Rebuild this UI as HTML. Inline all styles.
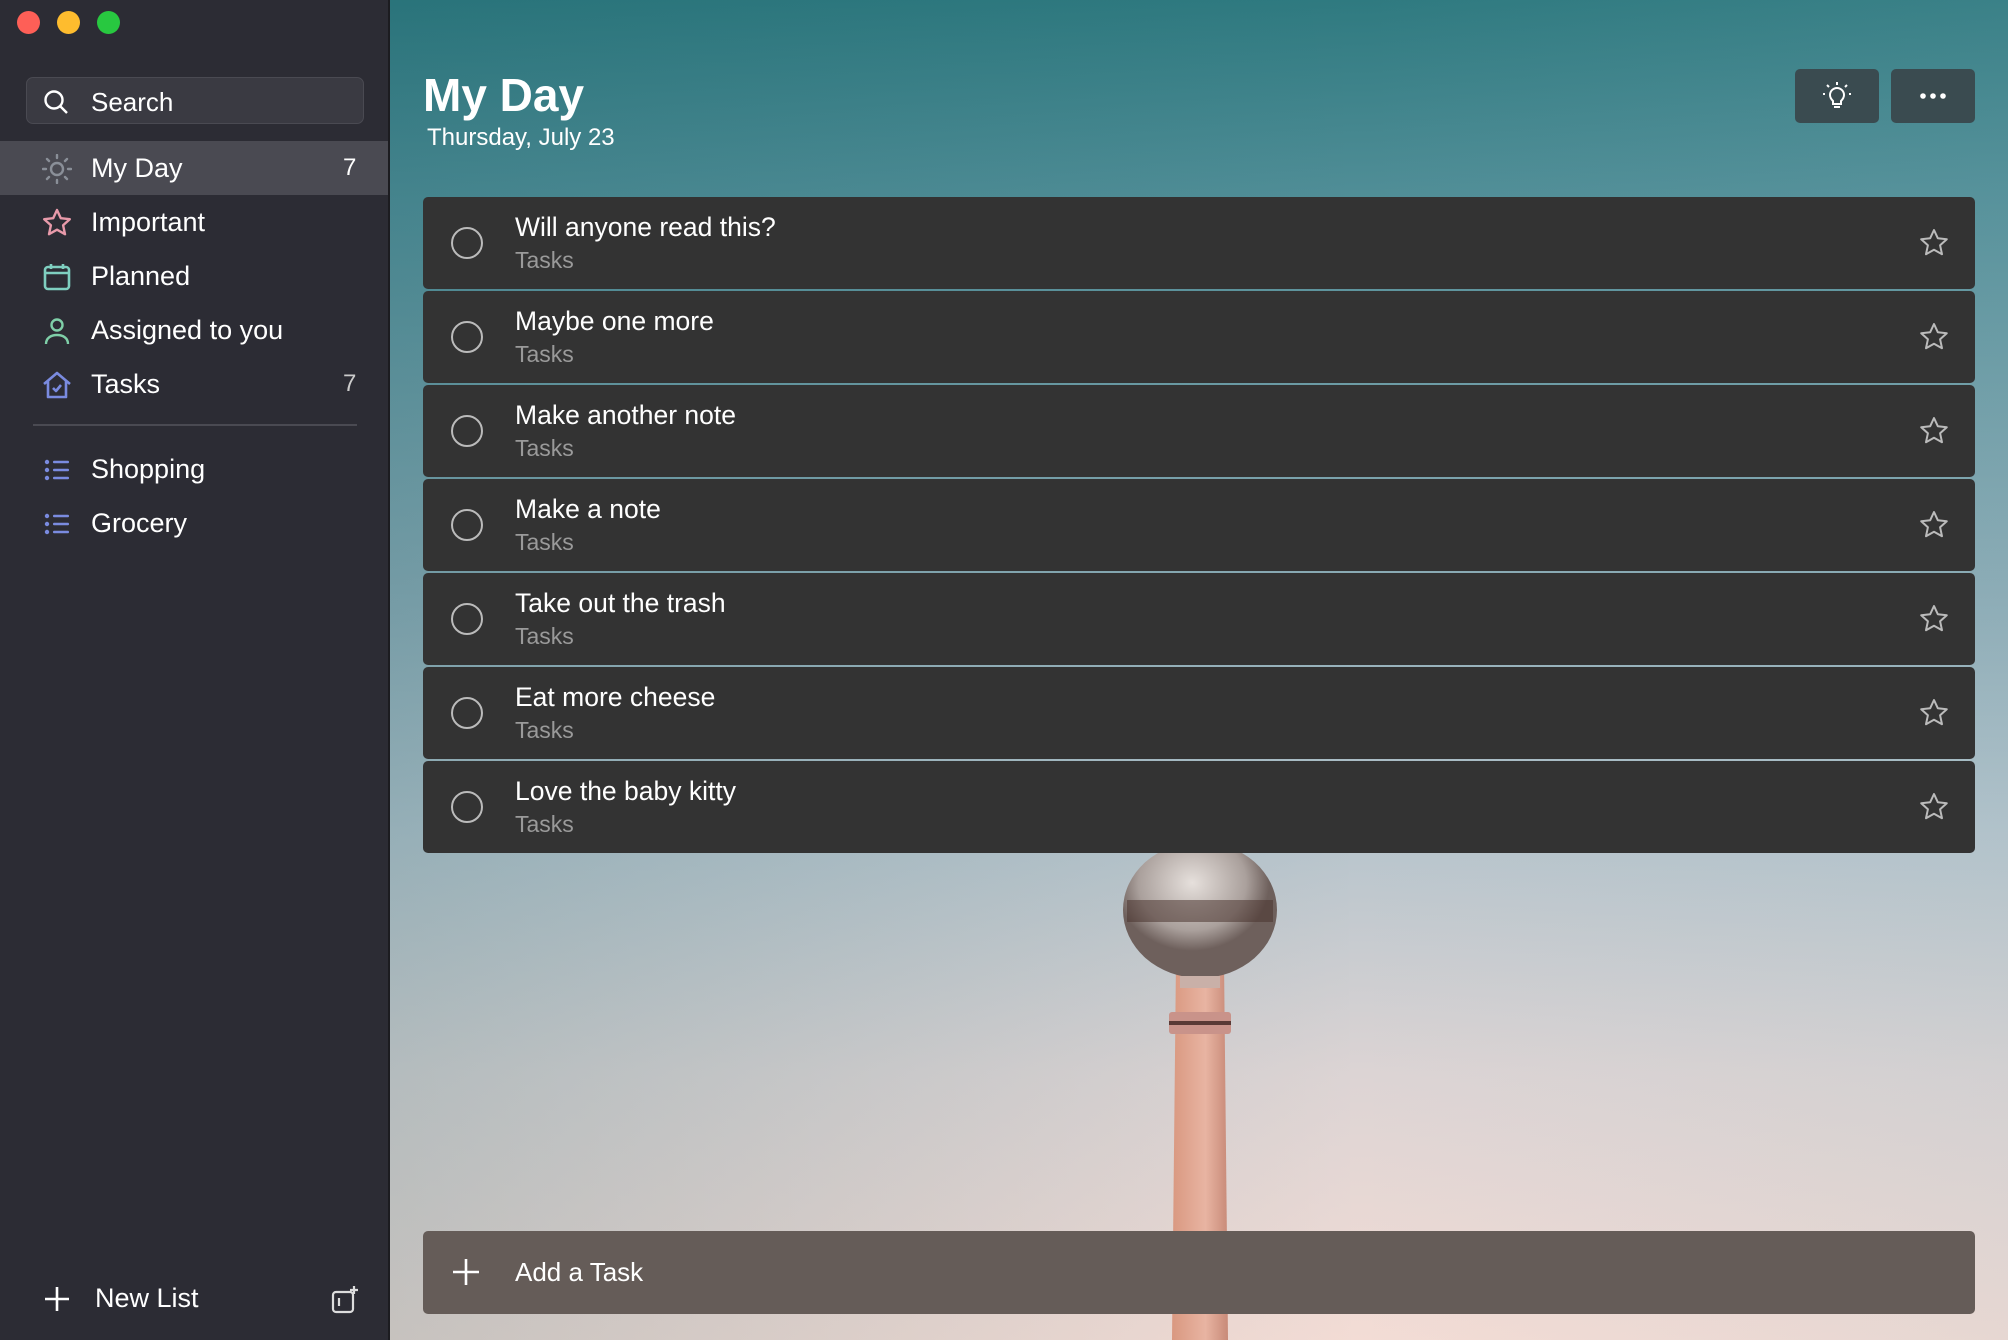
<!DOCTYPE html>
<html><head><meta charset="utf-8"><style>
*{margin:0;padding:0;box-sizing:border-box}
body{width:2008px;height:1340px;overflow:hidden;font-family:"Liberation Sans",sans-serif;position:relative;background:#2c2c33}
#side{position:absolute;left:0;top:0;width:390px;height:1340px;background:#2c2c34;border-right:2px solid #1c1c20}
.dot{position:absolute;top:11px;width:23px;height:23px;border-radius:50%}
#search{position:absolute;left:26px;top:77px;width:338px;height:47px;border-radius:7px;background:#3a3a42;border:1px solid #4a4a52;color:#fff;font-size:26px}
.row{position:absolute;left:0;width:388px;height:54px;color:#fff;font-size:27px;line-height:54px}
.row .t{position:absolute;left:91px}
.row .c{position:absolute;left:343px;color:#ccc;font-size:24px}
.row svg{position:absolute;left:42px;top:13px}
#main{position:absolute;left:390px;top:0;width:1618px;height:1340px;overflow:hidden;
background:linear-gradient(180deg,#2f7a80 0%,#4f8d96 14%,#8eacb6 45%,#b6c4cc 62%,#dcd4d4 80%,#f3dcd5 100%)}
#main:before{content:"";position:absolute;inset:0;background:linear-gradient(90deg,rgba(20,90,100,.2),rgba(0,0,0,0) 60%,rgba(140,180,190,.12))}
.card{position:absolute;left:33px;width:1552px;height:92px;background:#333;border-radius:5px;color:#fff}
.card .ck{position:absolute;left:28px;top:30px;width:32px;height:32px;border:2.5px solid #bbb;border-radius:50%}
.card .a{position:absolute;left:92px;top:15px;font-size:26.5px}
.card .b{position:absolute;left:92px;top:50px;font-size:23px;color:#9a9a9a}
.card svg{position:absolute;right:26px;top:31px}
.btn{position:absolute;top:69px;width:84px;height:54px;background:#3a4b50;border-radius:5px}
</style></head><body>
<div id="side">
<div class="dot" style="left:17px;background:#fe5f57"></div>
<div class="dot" style="left:57px;background:#febc2e"></div>
<div class="dot" style="left:97px;background:#28c840"></div>
<div id="search"><svg style="position:absolute;left:15px;top:10px" width="28" height="28" viewBox="0 0 28 28" fill="none" stroke="#fff" stroke-width="2.4"><circle cx="12" cy="12" r="8.5"/><path d="M18 18l7 7"/></svg><span style="position:absolute;left:64px;top:9px">Search</span></div>
<div class="row" style="top:141px;background:#4a4a52"><svg width="30" height="30" viewBox="0 0 30 30" fill="none" stroke="#8a8f98" stroke-width="2.4"><circle cx="15" cy="15" r="6"/><path d="M15 1v3M15 26v3M1 15h3M26 15h3M5 5l2 2M23 23l2 2M5 25l2-2M23 7l2-2" stroke-linecap="round"/></svg><span class="t">My Day</span><span class="c" style="color:#fff">7</span></div>
<div class="row" style="top:195px"><svg width="30" height="30" viewBox="0 0 30 30" fill="none" stroke="#e89aaa" stroke-width="2.4" stroke-linejoin="round"><path d="M15 2l3.8 8.2 9 1-6.7 6.1 1.9 8.9L15 21.7 7 26.2l1.9-8.9L2.2 11.2l9-1z"/></svg><span class="t">Important</span></div>
<div class="row" style="top:249px"><svg width="30" height="30" viewBox="0 0 30 30" fill="none" stroke="#7fcfc0" stroke-width="2.6"><rect x="3" y="5" width="24" height="22" rx="3"/><path d="M3 11h24M9 2v5M21 2v5"/></svg><span class="t">Planned</span></div>
<div class="row" style="top:303px"><svg width="30" height="30" viewBox="0 0 30 30" fill="none" stroke="#7fcfa8" stroke-width="2.4"><circle cx="15" cy="9" r="5.5"/><path d="M4 28c0-6 5-9 11-9s11 3 11 9"/></svg><span class="t">Assigned to you</span></div>
<div class="row" style="top:357px"><svg width="30" height="30" viewBox="0 0 30 30" fill="none" stroke="#7a8be0" stroke-width="2.6" stroke-linejoin="round"><path d="M2 14L15 3l13 11M6 11v16h18V11"/><path d="M11 18l3 3 5-6"/></svg><span class="t">Tasks</span><span class="c">7</span></div>
<div style="position:absolute;left:33px;top:424px;width:324px;height:2px;background:#4a4a52"></div>
<div class="row" style="top:442px"><svg width="30" height="30" viewBox="0 0 30 30" fill="#7a8be0"><circle cx="5" cy="7" r="2.2"/><circle cx="5" cy="15" r="2.2"/><circle cx="5" cy="23" r="2.2"/><rect x="11" y="5.8" width="16" height="2.4" rx="1"/><rect x="11" y="13.8" width="16" height="2.4" rx="1"/><rect x="11" y="21.8" width="16" height="2.4" rx="1"/></svg><span class="t">Shopping</span></div>
<div class="row" style="top:496px"><svg width="30" height="30" viewBox="0 0 30 30" fill="#7a8be0"><circle cx="5" cy="7" r="2.2"/><circle cx="5" cy="15" r="2.2"/><circle cx="5" cy="23" r="2.2"/><rect x="11" y="5.8" width="16" height="2.4" rx="1"/><rect x="11" y="13.8" width="16" height="2.4" rx="1"/><rect x="11" y="21.8" width="16" height="2.4" rx="1"/></svg><span class="t">Grocery</span></div>
<div class="row" style="top:1271px"><svg width="30" height="30" viewBox="0 0 30 30" stroke="#fff" stroke-width="2.6"><path d="M15 3v24M3 15h24"/></svg><span class="t" style="left:95px">New List</span><svg style="left:330px" width="32" height="32" viewBox="0 0 32 32" fill="none" stroke="#ddd" stroke-width="2.2"><rect x="3" y="8" width="20" height="20" rx="3"/><path d="M9 14v8M24 2v8M20 6h8"/></svg></div>
</div>
<div id="main">
<svg style="position:absolute;left:720px;top:840px" width="180" height="500" viewBox="0 0 180 500">
<defs><linearGradient id="s" x1="0" x2="1"><stop offset="0" stop-color="#d99880"/><stop offset=".6" stop-color="#e8b4a2"/><stop offset="1" stop-color="#c88a78"/></linearGradient><radialGradient id="b" cx=".45" cy=".3"><stop offset="0" stop-color="#e6e0dc"/><stop offset=".7" stop-color="#aaa09c"/><stop offset="1" stop-color="#6e605c"/></radialGradient></defs>
<path d="M66 120 L62 500 L118 500 L114 120Z" fill="url(#s)"/>
<rect x="59" y="172" width="62" height="22" rx="3" fill="#c9938a"/>
<rect x="59" y="181" width="62" height="4" fill="#5a3a36"/>
<ellipse cx="90" cy="70" rx="77" ry="68" fill="url(#b)"/>
<rect x="17" y="60" width="146" height="22" fill="#4a3430" opacity=".55"/>
<rect x="70" y="136" width="40" height="12" fill="#c9b0a8"/>
</svg>
<div style="position:absolute;left:33px;top:68px;color:#fff;font-size:46px;font-weight:bold">My Day</div>
<div style="position:absolute;left:37px;top:124px;color:#fff;font-size:24px">Thursday, July 23</div>
<div class="btn" style="left:1405px"><svg style="position:absolute;left:27px;top:12px" width="30" height="30" viewBox="0 0 30 30" fill="none" stroke="#fff" stroke-width="2"><path d="M11 20c-2-2-3-3.5-3-6a7 7 0 0114 0c0 2.5-1 4-3 6v3h-8z"/><path d="M12 26h6M15 1v3M3 13H1M29 13h-2M5 4l2 2M25 4l-2 2"/></svg></div>
<div class="btn" style="left:1501px"><svg style="position:absolute;left:28px;top:22px" width="28" height="10" viewBox="0 0 28 10" fill="#fff"><circle cx="4" cy="5" r="2.8"/><circle cx="14" cy="5" r="2.8"/><circle cx="24" cy="5" r="2.8"/></svg></div>
<div class="card" style="top:197px"><div class="ck"></div><div class="a">Will anyone read this?</div><div class="b">Tasks</div><svg width="30" height="30" viewBox="0 0 30 30" fill="none" stroke="#bbb" stroke-width="2" stroke-linejoin="round"><path d="M15 2l3.8 8.2 9 1-6.7 6.1 1.9 8.9L15 21.7 7 26.2l1.9-8.9L2.2 11.2l9-1z"/></svg></div>
<div class="card" style="top:291px"><div class="ck"></div><div class="a">Maybe one more</div><div class="b">Tasks</div><svg width="30" height="30" viewBox="0 0 30 30" fill="none" stroke="#bbb" stroke-width="2" stroke-linejoin="round"><path d="M15 2l3.8 8.2 9 1-6.7 6.1 1.9 8.9L15 21.7 7 26.2l1.9-8.9L2.2 11.2l9-1z"/></svg></div>
<div class="card" style="top:385px"><div class="ck"></div><div class="a">Make another note</div><div class="b">Tasks</div><svg width="30" height="30" viewBox="0 0 30 30" fill="none" stroke="#bbb" stroke-width="2" stroke-linejoin="round"><path d="M15 2l3.8 8.2 9 1-6.7 6.1 1.9 8.9L15 21.7 7 26.2l1.9-8.9L2.2 11.2l9-1z"/></svg></div>
<div class="card" style="top:479px"><div class="ck"></div><div class="a">Make a note</div><div class="b">Tasks</div><svg width="30" height="30" viewBox="0 0 30 30" fill="none" stroke="#bbb" stroke-width="2" stroke-linejoin="round"><path d="M15 2l3.8 8.2 9 1-6.7 6.1 1.9 8.9L15 21.7 7 26.2l1.9-8.9L2.2 11.2l9-1z"/></svg></div>
<div class="card" style="top:573px"><div class="ck"></div><div class="a">Take out the trash</div><div class="b">Tasks</div><svg width="30" height="30" viewBox="0 0 30 30" fill="none" stroke="#bbb" stroke-width="2" stroke-linejoin="round"><path d="M15 2l3.8 8.2 9 1-6.7 6.1 1.9 8.9L15 21.7 7 26.2l1.9-8.9L2.2 11.2l9-1z"/></svg></div>
<div class="card" style="top:667px"><div class="ck"></div><div class="a">Eat more cheese</div><div class="b">Tasks</div><svg width="30" height="30" viewBox="0 0 30 30" fill="none" stroke="#bbb" stroke-width="2" stroke-linejoin="round"><path d="M15 2l3.8 8.2 9 1-6.7 6.1 1.9 8.9L15 21.7 7 26.2l1.9-8.9L2.2 11.2l9-1z"/></svg></div>
<div class="card" style="top:761px"><div class="ck"></div><div class="a">Love the baby kitty</div><div class="b">Tasks</div><svg width="30" height="30" viewBox="0 0 30 30" fill="none" stroke="#bbb" stroke-width="2" stroke-linejoin="round"><path d="M15 2l3.8 8.2 9 1-6.7 6.1 1.9 8.9L15 21.7 7 26.2l1.9-8.9L2.2 11.2l9-1z"/></svg></div>
<div style="position:absolute;left:33px;top:1231px;width:1552px;height:83px;background:#655c58;border-radius:5px;color:#fff;font-size:26px">
<svg style="position:absolute;left:28px;top:26px" width="30" height="30" viewBox="0 0 30 30" stroke="#fff" stroke-width="2.6"><path d="M15 2v26M2 15h26"/></svg>
<span style="position:absolute;left:92px;top:26px">Add a Task</span></div>
</div>
</body></html>
